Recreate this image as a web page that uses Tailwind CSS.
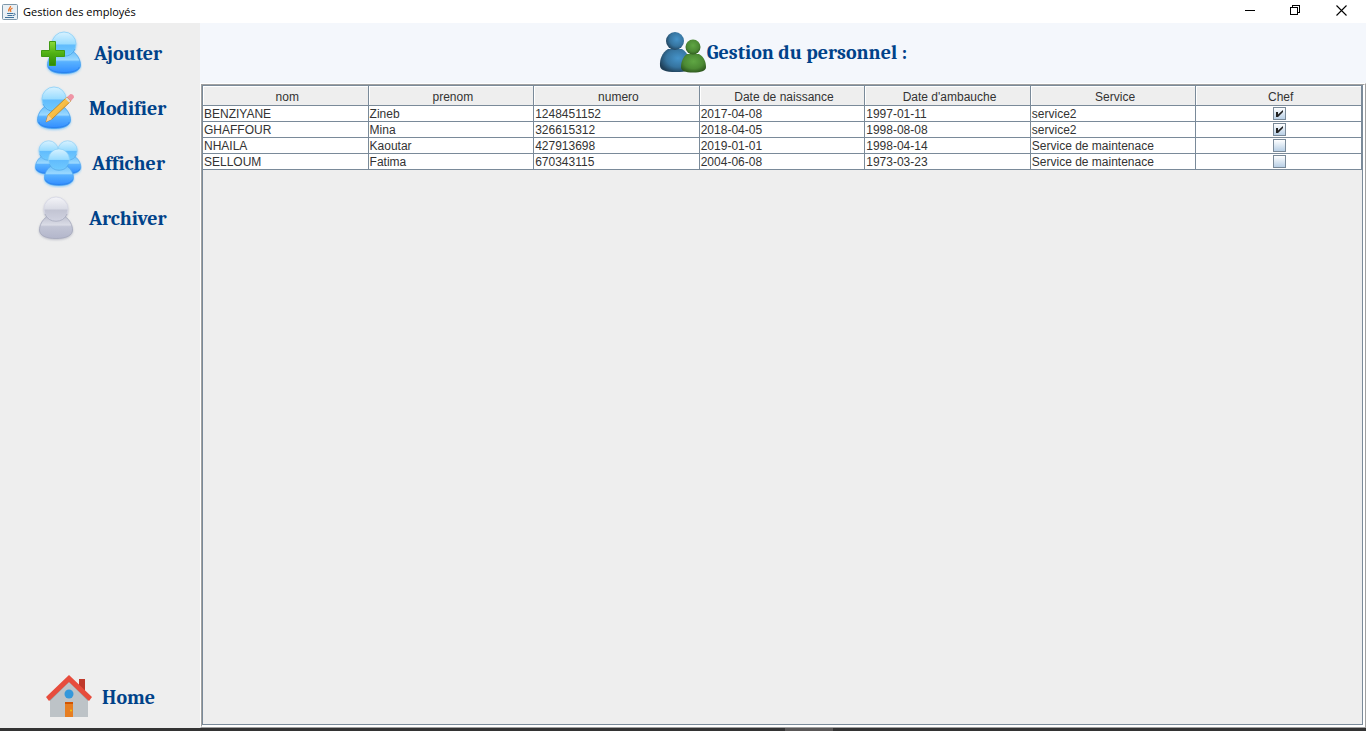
<!DOCTYPE html>
<html lang="fr">
<head>
<meta charset="utf-8">
<title>Gestion des employés</title>
<script src="https://cdn.jsdelivr.net/npm/@tailwindcss/browser@4"></script>
</head>
<body class="h-screen flex flex-col overflow-hidden bg-white font-['Liberation_Sans',Arial,sans-serif] text-[#333]">
<svg class="absolute size-0" aria-hidden="true">
  <defs>
    <linearGradient id="head" x1="0" y1="0" x2="0" y2="1"><stop offset="0" stop-color="#d8f2ff"/><stop offset=".5" stop-color="#9adcff"/><stop offset=".54" stop-color="#62bcfd"/><stop offset="1" stop-color="#6fcaff"/></linearGradient>
    <linearGradient id="torso" x1="0" y1="0" x2="0" y2="1"><stop offset="0" stop-color="#6cc0fa"/><stop offset=".38" stop-color="#9ad8ff"/><stop offset=".46" stop-color="#5ab2ff"/><stop offset="1" stop-color="#2f8cff"/></linearGradient>
    <linearGradient id="ghead" x1="0" y1="0" x2="0" y2="1"><stop offset="0" stop-color="#f4f4f8"/><stop offset=".5" stop-color="#d9dbe5"/><stop offset=".54" stop-color="#c2c4d3"/><stop offset="1" stop-color="#d0d2e0"/></linearGradient>
    <linearGradient id="gtorso" x1="0" y1="0" x2="0" y2="1"><stop offset="0" stop-color="#c0c2d1"/><stop offset=".38" stop-color="#dadce6"/><stop offset=".46" stop-color="#c2c5d5"/><stop offset="1" stop-color="#b3b6cb"/></linearGradient>
    <linearGradient id="plus" x1="0" y1="0" x2="0" y2="1"><stop offset="0" stop-color="#8ada3a"/><stop offset=".5" stop-color="#4fb014"/><stop offset="1" stop-color="#2f8a08"/></linearGradient>
    <linearGradient id="pencil" x1="0" y1="0" x2="1" y2="1"><stop offset="0" stop-color="#ffdf6b"/><stop offset="1" stop-color="#f09a1c"/></linearGradient>
    <radialGradient id="blue" cx=".6" cy=".4" r=".65"><stop offset="0" stop-color="#4593c9"/><stop offset=".6" stop-color="#36749f"/><stop offset="1" stop-color="#1f3f57"/></radialGradient>
    <radialGradient id="green" cx=".5" cy=".4" r=".65"><stop offset="0" stop-color="#5fa643"/><stop offset=".6" stop-color="#4c8a34"/><stop offset="1" stop-color="#2a521b"/></radialGradient>
    <filter id="glow" x="-20%" y="-20%" width="140%" height="150%"><feDropShadow dx="0" dy="1" stdDeviation="1" flood-color="#4ab0ff" flood-opacity=".6"/></filter>
    <filter id="gglow" x="-20%" y="-20%" width="140%" height="150%"><feDropShadow dx="0" dy="1" stdDeviation="1" flood-color="#9a9cb0" flood-opacity=".6"/></filter>
    <g id="person">
      <path d="M8 20.500C3 24 .5 29.500 .5 34C.5 39.500 7 42.500 17 42.500S33.500 39.500 33.500 34C33.500 29.500 31 24 26 20.500Z" fill="url(#torso)" stroke="#4aa2ee" stroke-width=".8"/>
      <path d="M1.700 36C3 39.800 9 41.500 17 41.500S31 39.800 32.300 36" fill="none" stroke="#2a7fe8" stroke-width=".8"/>
      <circle cx="17" cy="13" r="12" fill="url(#head)" stroke="#8dd0f6" stroke-width=".8"/>
      <path d="M6 18A12 12 0 0 0 28 18" fill="none" stroke="#4aa6ec" stroke-width=".9"/>
    </g>
  </defs>
</svg>
<header class="h-[23px] shrink-0 flex items-center bg-white pl-0.5 text-black">
  <svg class="size-4" viewBox="0 0 16 16"><rect x=".5" y=".5" width="15" height="15" rx="1" fill="#e9f0f5" stroke="#7d97aa"/><path d="M8.500 2C9 4 5.500 5 7 7.500M10.500 4C8 5.500 8 6 9 8" fill="none" stroke="#e8762c" stroke-width="1.300"/><path d="M5 9.500H11M5.500 11.500H10.500M3 13.500H12M11.500 9.500C14 9 13.500 11.500 11 11.500" fill="none" stroke="#41729b"/></svg>
  <h1 class="ml-[5px] font-['Open_Sans','Noto_Sans',sans-serif] text-[11px] leading-4">Gestion des employés</h1>
  <div class="ml-auto flex h-full pr-0.5">
    <button aria-label="Réduire" class="w-[46px] grid place-items-center"><svg class="h-[11px] w-[11px]" viewBox="0 1 11 11" shape-rendering="crispEdges"><path d="M0 5.500H10" stroke="#000"/></svg></button>
    <button aria-label="Restaurer" class="w-[45px] grid place-items-center"><svg class="h-[11px] w-[11px]" viewBox="0 1 11 11" fill="none" shape-rendering="crispEdges" overflow="visible"><path d="M.5 2.500H7.500V9.500H.5ZM2.500 2.500V.5H9.500V7.500H7.500" stroke="#000"/></svg></button>
    <button aria-label="Fermer" class="w-[46px] grid place-items-center"><svg class="h-[11px] w-[11px]" viewBox="0 1 11 11" overflow="visible"><path d="M.5 .5L10.500 10.500M10.500 .5L.5 10.500" stroke="#000" stroke-width="1.100"/></svg></button>
  </div>
</header>
<div class="flex min-h-0 flex-1">
  <nav class="w-[200px] shrink-0 flex flex-col bg-[#eee] pt-[3px] pb-1 font-[Cambria,Caladea,'Noto_Serif','DejaVu_Serif_Condensed','DejaVu_Serif',serif] text-[20px] leading-6 font-bold text-[#004289]">
    <button class="h-[55px] flex items-center pl-[34px]">
      <svg class="h-12 w-12" viewBox="0 2 48 48"><g filter="url(#glow)"><use href="#person" x="13" y="3"/></g><path d="M15.500 13.500H21.500V22.500H30.500V28.500H21.500V37.500H15.500V28.500H7.500V22.500H15.500Z" fill="url(#plus)" stroke="#3f9a12" stroke-linejoin="round"/></svg>
      <span class="ml-3">Ajouter</span>
    </button>
    <button class="h-[55px] flex items-center pl-[34px]">
      <svg class="h-12 w-12" viewBox="0 2 48 48"><g filter="url(#glow)"><use href="#person" x="3" y="3"/></g><path d="M12 39L14 32L33 14L37 18L18 36Z" fill="url(#pencil)" stroke="#b8740f" stroke-width=".7"/><path d="M12 39L14 32L18 36Z" fill="#f5d09b"/><path d="M33 14L36.500 11Q40 11 40 14.500L37 18Z" fill="#ef94a5"/><path d="M32 15L36 19" stroke="#ddd" stroke-width="2"/></svg>
      <span class="ml-[7px]">Modifier</span>
    </button>
    <button class="h-[55px] flex items-center pl-[34px]">
      <svg class="h-12 w-12" viewBox="0 2 48 48"><g filter="url(#glow)"><use href="#person" transform="translate(1 2) scale(.8)"/><use href="#person" transform="translate(20 2) scale(.8)"/><use href="#person" transform="translate(10 10) scale(.88)"/></g></svg>
      <span class="ml-[10px]">Afficher</span>
    </button>
    <button class="h-[55px] flex items-center pl-[34px]">
      <svg class="h-12 w-12" viewBox="0 2 48 48"><g filter="url(#gglow)" stroke="#a5a8bb" stroke-width=".8" transform="translate(5 3)"><path d="M8 20.500C3 24 .5 29.500 .5 34C.5 39.500 7 42.500 17 42.500S33.500 39.500 33.500 34C33.500 29.500 31 24 26 20.500Z" fill="url(#gtorso)"/><circle cx="17" cy="13" r="12" fill="url(#ghead)" stroke="#d5d7e4"/><path d="M6 18A12 12 0 0 0 28 18" fill="none"/></g></svg>
      <span class="ml-[7px]">Archiver</span>
    </button>
    <button class="mt-auto h-[52px] flex items-center pl-[45px]">
      <svg class="h-12 w-12" viewBox="0 0 48 48"><path d="M34 5H40V21L34 15Z" fill="#c0392b"/><path d="M5 24L24 7L43 24V43H5Z" fill="#bdc3c7"/><path d="M5 27L24 8L43 27V22L24 4L5 22Z" fill="#95a5a6"/><path d="M1 23L24 1L47 23L44 27L24 8L4 27Z" fill="#e74c3c"/><circle cx="24" cy="20" r="4.500" fill="#3498db"/><path d="M20 28H28V43H20Z" fill="#e67e22"/><path d="M20 28H28V30H20Z" fill="#d35400"/><circle cx="26" cy="36.500" r="1" fill="#f1c40f"/></svg>
      <span class="ml-[9px]">Home</span>
    </button>
  </nav>
  <main class="min-w-0 flex-1 flex flex-col">
    <div class="h-[60px] shrink-0 flex items-center justify-center bg-[#f4f7fc]">
      <svg class="h-12 w-12" viewBox="0 0 48 48"><path d="M9 20C3 24 .5 30 1 37C1.500 41 6 43 17 43S31 41 31 37C31 30 29 24 23 20Z" fill="url(#blue)"/><circle cx="16" cy="12" r="9" fill="url(#blue)"/><path d="M28 25C24 28 22 33 22 38C22 42 26 43.500 34 43.500S47 42 47 38C47 33 45 28 40 25Z" fill="url(#green)"/><circle cx="34" cy="18" r="7.500" fill="url(#green)"/></svg>
      <h2 class="font-[Cambria,Caladea,'Noto_Serif','DejaVu_Serif_Condensed','DejaVu_Serif',serif] text-[20px] leading-6 font-bold text-[#004289]">Gestion du personnel :</h2>
    </div>
    <div class="min-h-0 flex-1 flex border border-r-[#a0a0a0] border-b-[#a0a0a0] border-white">
      <div class="min-w-0 flex-1 flex border border-t-[#a0a0a0] border-l-[#a0a0a0] border-white">
        <div class="min-w-0 flex-1 mr-px mb-px border border-[#7a8a99] bg-[#eee]">
          <table class="w-full table-fixed border-separate border-spacing-0 text-[12px] leading-[14px]">
            <thead>
              <tr class="h-5 [&>th]:border-r [&>th]:border-b [&>th]:border-[#7a8a99] [&>th]:p-0 [&>th]:pt-0.5 [&>th]:pl-1 [&>th]:font-normal [&>th]:shadow-[inset_1px_1px_0_#fff]">
                <th scope="col">nom</th><th scope="col">prenom</th><th scope="col">numero</th><th scope="col">Date de naissance</th><th scope="col">Date d'ambauche</th><th scope="col">Service</th><th scope="col">Chef</th>
              </tr>
            </thead>
            <tbody class="bg-white [&_td]:h-4 [&_td]:border-r [&_td]:border-b [&_td]:border-[#7a8a99] [&_td]:p-0 [&_td]:pt-px [&_td]:pl-px [&_td:last-child]:pt-0 [&_input]:mx-auto [&_input]:block [&_input]:size-[13px] [&_input]:appearance-none [&_input]:border [&_input]:border-[#7a8a99] [&_input]:bg-linear-to-b [&_input]:from-white [&_input]:to-[#b8cfe5] [&_label]:relative [&_label]:mx-auto [&_label]:block [&_label]:size-[13px] [&_svg]:pointer-events-none [&_svg]:absolute [&_svg]:inset-0 [&_svg]:hidden [&_input:checked+svg]:block">
              <tr><td>BENZIYANE</td><td>Zineb</td><td>1248451152</td><td>2017-04-08</td><td>1997-01-11</td><td>service2</td><td><label><input type="checkbox" checked aria-label="Chef : BENZIYANE"><svg viewBox="0 0 13 13"><path d="M3 5H5V7.500L10 3V5L5 10H3Z" fill="#222"/></svg></label></td></tr>
              <tr><td>GHAFFOUR</td><td>Mina</td><td>326615312</td><td>2018-04-05</td><td>1998-08-08</td><td>service2</td><td><label><input type="checkbox" checked aria-label="Chef : GHAFFOUR"><svg viewBox="0 0 13 13"><path d="M3 5H5V7.500L10 3V5L5 10H3Z" fill="#222"/></svg></label></td></tr>
              <tr><td>NHAILA</td><td>Kaoutar</td><td>427913698</td><td>2019-01-01</td><td>1998-04-14</td><td>Service de maintenace</td><td><label><input type="checkbox" aria-label="Chef : NHAILA"><svg viewBox="0 0 13 13"><path d="M3 5H5V7.500L10 3V5L5 10H3Z" fill="#222"/></svg></label></td></tr>
              <tr><td>SELLOUM</td><td>Fatima</td><td>670343115</td><td>2004-06-08</td><td>1973-03-23</td><td>Service de maintenace</td><td><label><input type="checkbox" aria-label="Chef : SELLOUM"><svg viewBox="0 0 13 13"><path d="M3 5H5V7.500L10 3V5L5 10H3Z" fill="#222"/></svg></label></td></tr>
            </tbody>
          </table>
        </div>
      </div>
    </div>
  </main>
</div>
<footer class="h-[3px] shrink-0 bg-[#333]"><div class="ml-[785px] h-full w-12 bg-[#5a5858]"></div></footer>
</body>
</html>
